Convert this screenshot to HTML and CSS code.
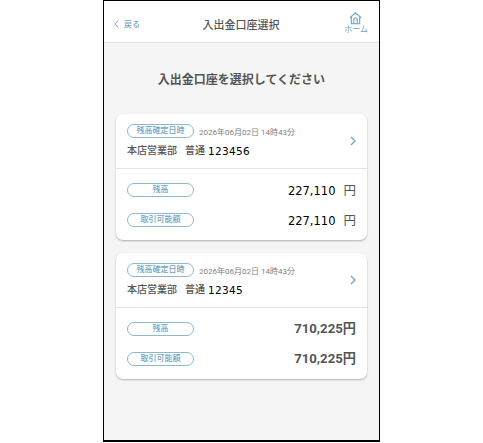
FILE: index.html
```html
<!DOCTYPE html>
<html lang="ja">
<head>
    <meta charset="UTF-8">
    <meta name="viewport" content="width=device-width, initial-scale=1.0">
    <title>入出金口座選択</title>
    <link rel="stylesheet" href="styles.css">
</head>
<body>
    <div class="phone">
        <div class="header">
            <div class="back">
                <svg class="back-icon" viewBox="0 0 6 10"><path d="M4.8 1 L1 5 L4.8 9"/></svg>
                <span>戻る</span>
            </div>
            <div class="header-title">入出金口座選択</div>
            <div class="home">
                <svg class="home-icon" viewBox="0 0 14 14"><path d="M1 6.2 L7 1 L13 6.2 M2.5 5.2 V12.6 H11.5 V5.2 M5.2 12.6 V8 A1.8 1.8 0 0 1 8.8 8 V12.6"/></svg>
                <span>ホーム</span>
            </div>
        </div>

        <h1 class="page-title">入出金口座を選択してください</h1>

        <div class="card">
            <div class="card-top">
                <div class="card-info">
                    <div class="date-row">
                        <span class="pill pill-date">残高確定日時</span>
                        <span class="date">2026年06月02日 14時43分</span>
                    </div>
                    <div class="account">
                        <span>本店営業部</span>
                        <span class="account-type">普通</span>
                        <span class="account-no">123456</span>
                    </div>
                </div>
                <svg class="chevron" viewBox="0 0 6 10"><path d="M1 1 L5 5 L1 9"/></svg>
            </div>
            <div class="card-bottom">
                <div class="amount-row">
                    <span class="pill">残高</span>
                    <span class="amount-plain">227,110<span class="yen-gap">円</span></span>
                </div>
                <div class="amount-row">
                    <span class="pill">取引可能額</span>
                    <span class="amount-plain">227,110<span class="yen-gap">円</span></span>
                </div>
            </div>
        </div>

        <div class="card">
            <div class="card-top">
                <div class="card-info">
                    <div class="date-row">
                        <span class="pill pill-date">残高確定日時</span>
                        <span class="date">2026年06月02日 14時43分</span>
                    </div>
                    <div class="account">
                        <span>本店営業部</span>
                        <span class="account-type">普通</span>
                        <span class="account-no">12345</span>
                    </div>
                </div>
                <svg class="chevron" viewBox="0 0 6 10"><path d="M1 1 L5 5 L1 9"/></svg>
            </div>
            <div class="card-bottom">
                <div class="amount-row">
                    <span class="pill">残高</span>
                    <span class="amount">710,225円</span>
                </div>
                <div class="amount-row">
                    <span class="pill">取引可能額</span>
                    <span class="amount">710,225円</span>
                </div>
            </div>
        </div>
    </div>
</body>
</html>
```

FILE: styles.css
```css
* {
    margin: 0;
    padding: 0;
    box-sizing: border-box;
}

body {
    width: 483px;
    height: 443px;
    background: white;
    font-family: Roboto, "Noto Sans CJK JP", sans-serif;
    color: #555;
    overflow: hidden;
}

.phone {
    width: 277px;
    height: 442px;
    margin-left: 103px;
    background: #f5f5f5;
    border: 1px solid #000;
    border-bottom-width: 2px;
}

.header {
    display: flex;
    align-items: center;
    justify-content: space-between;
    height: 42px;
    padding: 4px 11px 0 10px;
    background: white;
    border-bottom: 1px solid #e6e6e6;
}

.back {
    display: flex;
    align-items: center;
    gap: 5px;
    width: 60px;
    font-size: 8px;
    font-weight: 500;
    color: #6fa3bf;
}

.back-icon {
    width: 5px;
    height: 8px;
}

.back-icon path,
.chevron path,
.home-icon path {
    fill: none;
    stroke: #6fa3bf;
    stroke-width: 1.2;
}

.header-title {
    font-size: 11px;
    font-weight: 500;
}

.home {
    display: flex;
    flex-direction: column;
    width: 60px;
    align-items: flex-end;
    font-size: 8px;
    line-height: 10px;
    color: #6fa3bf;
}

.home-icon {
    width: 13px;
    height: 13px;
    margin-right: 6px;
}

.page-title {
    margin: 29px 0 26px;
    text-align: center;
    font-size: 12px;
    line-height: 16px;
    font-weight: 700;
}

.card {
    margin: 0 12px 13px;
    background: white;
    border-radius: 7px;
    box-shadow: 0 1px 2px rgba(0, 0, 0, 0.28);
}

.card-top {
    display: flex;
    align-items: center;
    justify-content: space-between;
    height: 55px;
    padding: 0 11px;
    border-bottom: 1px solid #e3e3e3;
}

.card-info {
    padding-top: 1px;
}

.date-row {
    display: flex;
    align-items: center;
    gap: 5px;
}

.pill {
    display: block;
    width: 67px;
    height: 14px;
    border: 1.5px solid #8db8cf;
    border-radius: 7px;
    text-align: center;
    font-size: 8px;
    line-height: 11px;
    font-weight: 500;
    color: #6fa3bf;
}

.date {
    font-size: 8px;
    color: #808080;
}

.account {
    display: flex;
    align-items: center;
    margin-top: 5px;
    font-size: 10px;
    line-height: 16px;
    font-weight: 500;
}

.account-type {
    margin-left: 8px;
}

.account-no {
    margin-left: 3px;
    font-family: "DejaVu Sans", sans-serif;
    font-size: 10.5px;
    font-weight: 400;
    color: #000;
    letter-spacing: 0.3px;
}

.chevron {
    width: 6px;
    height: 10px;
}

.card-bottom {
    display: flex;
    flex-direction: column;
    gap: 16px;
    padding: 14px 11px 13px;
}

.amount-row {
    display: flex;
    align-items: center;
    justify-content: space-between;
    height: 14px;
}

.amount {
    font-size: 13.2px;
    line-height: 14px;
    font-weight: 700;
}

.amount-plain {
    font-family: "DejaVu Sans", sans-serif;
    font-size: 11.5px;
    line-height: 14px;
    color: #000;
}

.yen-gap {
    margin-left: 8px;
    font-family: "Noto Sans CJK JP", sans-serif;
    font-size: 12.5px;
    color: #555;
}
```
